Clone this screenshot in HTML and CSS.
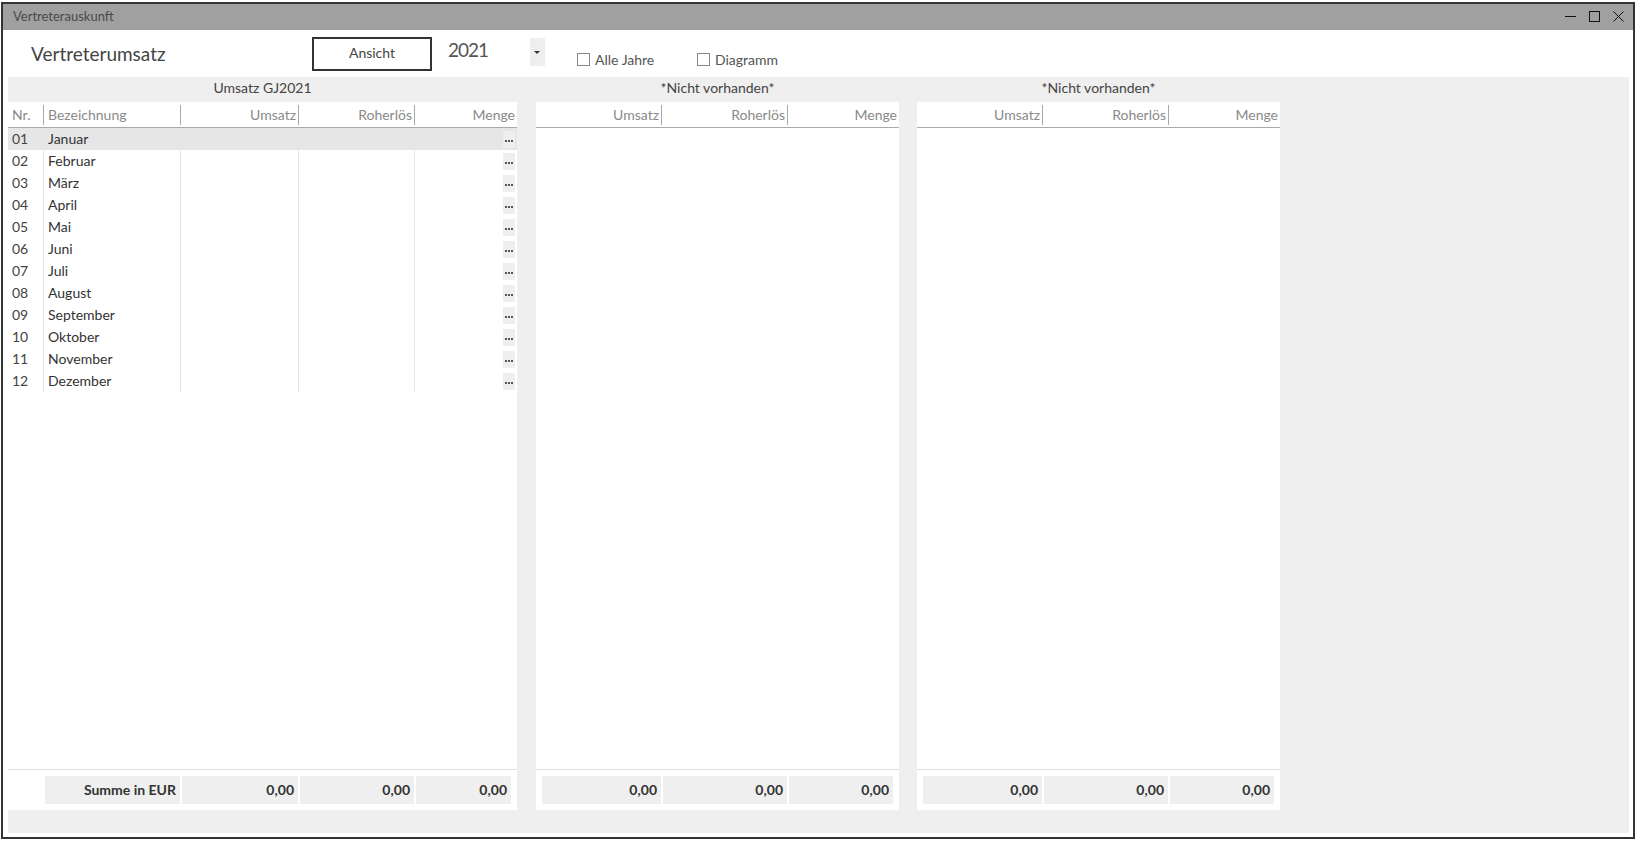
FILE: index.html
```html
<!DOCTYPE html>
<html lang="de">
<head>
<meta charset="utf-8">
<title>Vertreterauskunft</title>
<link rel="stylesheet" href="styles.css">
</head>
<body>
<div class="window">
  <div class="titlebar">
    <span class="title">Vertreterauskunft</span>
    <div class="controls">
      <svg width="11" height="11" viewBox="0 0 11 11"><rect x="0" y="5" width="11" height="1" fill="#111"/></svg>
      <svg width="11" height="11" viewBox="0 0 11 11"><rect x="0.5" y="0.5" width="10" height="10" fill="none" stroke="#111" stroke-width="1"/></svg>
      <svg width="11" height="11" viewBox="0 0 11 11"><path d="M0.5 0.5 L10.5 10.5 M10.5 0.5 L0.5 10.5" stroke="#111" stroke-width="1" fill="none"/></svg>
    </div>
  </div>
  <div class="content">
    <div class="toolbar">
      <h1 class="heading">Vertreterumsatz</h1>
      <button class="btn">Ansicht</button>
      <div class="year">2021</div>
      <div class="dropdown"><span class="caret"></span></div>
      <label class="check"><span class="box"></span>Alle Jahre</label>
      <label class="check"><span class="box"></span>Diagramm</label>
    </div>
    <div class="area">
      <div class="group g1">
        <div class="group-title">Umsatz GJ2021</div>
        <div class="panel">
          <div class="thead cols5">
            <div class="th left first">Nr.</div>
            <div class="th left">Bezeichnung</div>
            <div class="th">Umsatz</div>
            <div class="th">Roherlös</div>
            <div class="th">Menge</div>
          </div>
          <div class="tbody">
            <div class="row cols5 selected"><div class="td num">01</div><div class="td">Januar</div><div class="td"></div><div class="td"></div><div class="td more"><span class="dots"></span></div></div>
            <div class="row cols5"><div class="td num">02</div><div class="td">Februar</div><div class="td"></div><div class="td"></div><div class="td more"><span class="dots"></span></div></div>
            <div class="row cols5"><div class="td num">03</div><div class="td">März</div><div class="td"></div><div class="td"></div><div class="td more"><span class="dots"></span></div></div>
            <div class="row cols5"><div class="td num">04</div><div class="td">April</div><div class="td"></div><div class="td"></div><div class="td more"><span class="dots"></span></div></div>
            <div class="row cols5"><div class="td num">05</div><div class="td">Mai</div><div class="td"></div><div class="td"></div><div class="td more"><span class="dots"></span></div></div>
            <div class="row cols5"><div class="td num">06</div><div class="td">Juni</div><div class="td"></div><div class="td"></div><div class="td more"><span class="dots"></span></div></div>
            <div class="row cols5"><div class="td num">07</div><div class="td">Juli</div><div class="td"></div><div class="td"></div><div class="td more"><span class="dots"></span></div></div>
            <div class="row cols5"><div class="td num">08</div><div class="td">August</div><div class="td"></div><div class="td"></div><div class="td more"><span class="dots"></span></div></div>
            <div class="row cols5"><div class="td num">09</div><div class="td">September</div><div class="td"></div><div class="td"></div><div class="td more"><span class="dots"></span></div></div>
            <div class="row cols5"><div class="td num">10</div><div class="td">Oktober</div><div class="td"></div><div class="td"></div><div class="td more"><span class="dots"></span></div></div>
            <div class="row cols5"><div class="td num">11</div><div class="td">November</div><div class="td"></div><div class="td"></div><div class="td more"><span class="dots"></span></div></div>
            <div class="row cols5"><div class="td num">12</div><div class="td">Dezember</div><div class="td"></div><div class="td"></div><div class="td more"><span class="dots"></span></div></div>
          </div>
          <div class="tfoot foot5">
            <div class="blank"></div>
            <div class="tc">Summe in EUR</div>
            <div class="tc">0,00</div>
            <div class="tc">0,00</div>
            <div class="tc">0,00</div>
          </div>
        </div>
      </div>
      <div class="group g2">
        <div class="group-title">*Nicht vorhanden*</div>
        <div class="panel">
          <div class="thead cols3">
            <div class="th first">Umsatz</div>
            <div class="th">Roherlös</div>
            <div class="th">Menge</div>
          </div>
          <div class="tbody"></div>
          <div class="tfoot foot3">
            <div class="tc first">0,00</div>
            <div class="tc">0,00</div>
            <div class="tc">0,00</div>
          </div>
        </div>
      </div>
      <div class="group g3">
        <div class="group-title">*Nicht vorhanden*</div>
        <div class="panel">
          <div class="thead cols3">
            <div class="th first">Umsatz</div>
            <div class="th">Roherlös</div>
            <div class="th">Menge</div>
          </div>
          <div class="tbody"></div>
          <div class="tfoot foot3">
            <div class="tc first">0,00</div>
            <div class="tc">0,00</div>
            <div class="tc">0,00</div>
          </div>
        </div>
      </div>
    </div>
  </div>
</div>
</body>
</html>
```

FILE: styles.css
```css
* { box-sizing: border-box; }
html, body { margin: 0; padding: 0; background: #fff; }
body { font-family: Lato, "Open Sans", sans-serif; color: #333; }

.window {
  margin: 2px 0 0 1px;
  width: 1634px;
  height: 837px;
  border: 2px solid #333;
  display: flex;
  flex-direction: column;
  background: #fff;
}

.titlebar {
  flex: none;
  height: 26px;
  background: #a0a0a0;
  display: flex;
  align-items: center;
  padding: 0 9px 2px 10px;
}
.title { flex: 1; font-size: 13px; color: #4a4a4a; }
.controls { display: flex; gap: 13px; align-items: center; }
.controls svg { display: block; }

.content { flex: 1; display: flex; flex-direction: column; min-height: 0; }

.toolbar {
  flex: none;
  height: 47px;
  display: flex;
  align-items: flex-start;
}
.heading {
  margin: 12px 0 0 28px;
  width: 281px;
  font-size: 19px;
  font-weight: 400;
  line-height: 24px;
  color: #444;
}
.btn {
  margin-top: 7px;
  width: 120px;
  height: 34px;
  border: 2px solid #333;
  background: #fff;
  font-family: Lato, "Open Sans", sans-serif;
  font-size: 14px;
  color: #444;
  padding: 0 0 4px 0;
}
.year {
  margin: 8px 0 0 16px;
  width: 82px;
  font-size: 19px;
  line-height: 24px;
  letter-spacing: -1px;
  color: #555;
}
.dropdown {
  margin-top: 8px;
  width: 15px;
  height: 28px;
  background: #eee;
  display: flex;
  align-items: center;
  justify-content: center;
}
.caret {
  width: 0;
  height: 0;
  border-left: 3px solid transparent;
  border-right: 3px solid transparent;
  border-top: 3px solid #333;
  margin-left: -1px;
}
.check {
  margin: 21px 0 0 0;
  width: 120px;
  height: 16px;
  display: flex;
  align-items: center;
  font-size: 14px;
  color: #555;
}
.check:first-of-type { margin-left: 32px; }
.box {
  width: 13px;
  height: 13px;
  border: 1px solid #8a8a8a;
  background: #fff;
  margin-right: 5px;
}

.area {
  flex: 1;
  margin: 0 4px 4px 5px;
  background: #efefef;
  display: flex;
  min-height: 0;
}
.group {
  display: flex;
  flex-direction: column;
  padding-bottom: 23px;
}
.g1 { width: 509px; }
.g2 { width: 363px; margin-left: 19px; }
.g3 { width: 363px; margin-left: 18px; }
.group-title {
  flex: none;
  height: 25px;
  line-height: 21px;
  text-align: center;
  font-size: 14px;
  color: #444;
}
.panel {
  flex: 1;
  background: #fff;
  display: flex;
  flex-direction: column;
  min-height: 0;
}

.cols5 { display: grid; grid-template-columns: 35px 137px 118px 116px 1fr; }
.cols3 { display: grid; grid-template-columns: 125px 126px 1fr; }

.thead {
  flex: none;
  height: 26px;
  border-bottom: 1px solid #a9a9a9;
}
.th {
  margin-top: 3px;
  height: 20px;
  line-height: 19px;
  font-size: 14px;
  color: #8a8a8a;
  text-align: right;
  padding-right: 2px;
  border-left: 1px solid #a9a9a9;
  white-space: nowrap;
}
.th.first { border-left: none; }
.th.left { text-align: left; padding: 0 0 0 4px; }

.tbody { flex: 1; min-height: 0; }
.row { height: 22px; }
.row.selected { background: #e6e6e6; }
.td {
  height: 22px;
  line-height: 21px;
  font-size: 14px;
  color: #333;
  padding-left: 4px;
  border-left: 1px solid #e6e6e6;
  white-space: nowrap;
}
.td.num { border-left: none; color: #444; }
.td.more {
  display: flex;
  justify-content: flex-end;
  padding: 0 2px 0 0;
}
.dots {
  position: relative;
  margin-top: 3px;
  width: 12px;
  height: 17px;
  background: #eee;
}
.dots::before {
  content: "";
  position: absolute;
  left: 5px;
  top: 9px;
  width: 2px;
  height: 2px;
  background: #555;
  box-shadow: -3px 0 0 #555, 3px 0 0 #555;
}

.tfoot {
  flex: none;
  border-top: 1px solid #e0e0e0;
  display: grid;
}
.foot5 { grid-template-columns: 35px 137px 118px 116px 1fr; padding: 6px 6px 6px 0; }
.foot3 { grid-template-columns: 119px 126px 1fr; padding: 6px; }
.tc {
  margin-left: 2px;
  height: 28px;
  line-height: 28px;
  background: #efefef;
  text-align: right;
  padding-right: 4px;
  font-size: 14px;
  font-weight: 700;
  color: #333;
}
.tc.first { margin-left: 0; }
```
